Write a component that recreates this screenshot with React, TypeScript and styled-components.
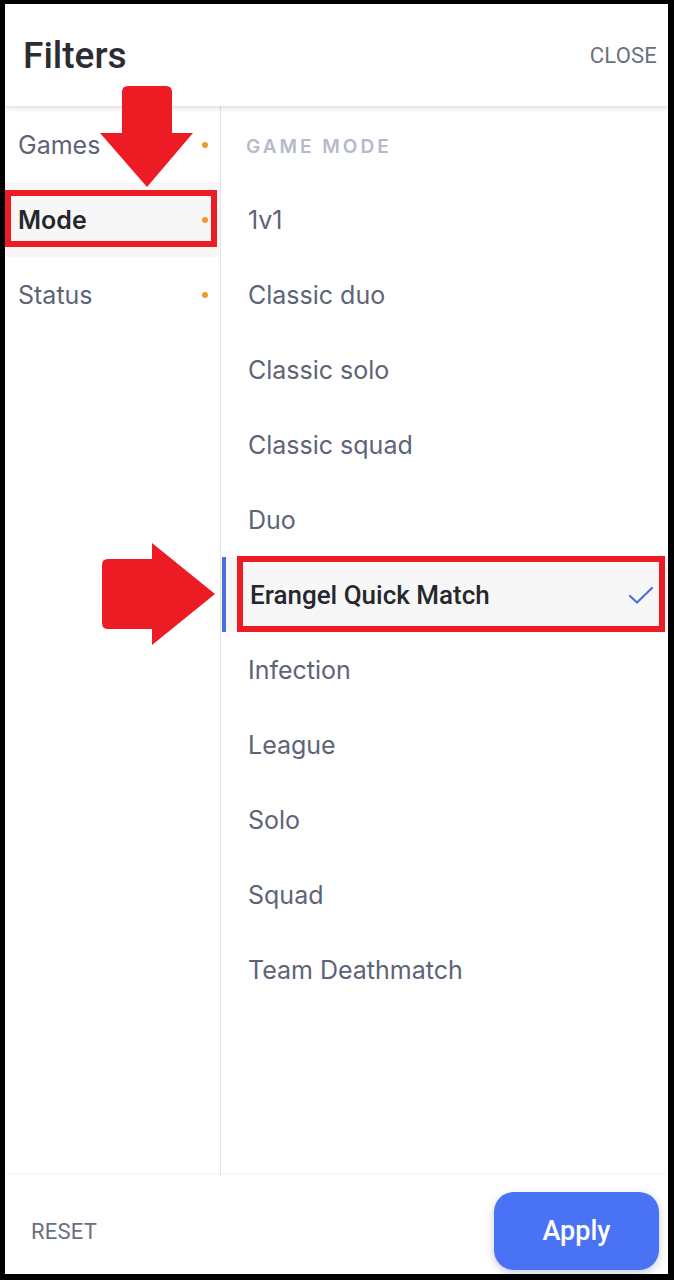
import React from 'react'
import styled, { createGlobalStyle } from 'styled-components'

const GlobalStyle = createGlobalStyle`
  html, body {
    margin: 0;
    padding: 0;
    background: #000;
  }
  * {
    box-sizing: border-box;
  }
`

const categories = [
  { label: 'Games', active: false },
  { label: 'Mode', active: true },
  { label: 'Status', active: false },
]

const modes = [
  '1v1',
  'Classic duo',
  'Classic solo',
  'Classic squad',
  'Duo',
  'Erangel Quick Match',
  'Infection',
  'League',
  'Solo',
  'Squad',
  'Team Deathmatch',
]

const selectedMode = 'Erangel Quick Match'

const App = () => {
  return (
    <>
      <GlobalStyle />
      <Frame>
        <Panel>
          <Header>
            <Title>Filters</Title>
            <TextButton>CLOSE</TextButton>
          </Header>
          <Body>
            <Sidebar>
              {categories.map(c => (
                <Category key={c.label} active={c.active}>
                  {c.label}
                  <Dot />
                </Category>
              ))}
            </Sidebar>
            <Options>
              <SectionLabel>GAME MODE</SectionLabel>
              {modes.map(m => (
                <Option key={m} selected={m === selectedMode}>
                  {m}
                  {m === selectedMode &&
                    <svg width='26' height='20' viewBox='0 0 26 20'>
                      <path d='M2 11 L9 17.5 L24 3' fill='none' stroke='#4a6fe0' strokeWidth='2.2' strokeLinecap='round' strokeLinejoin='round' />
                    </svg>
                  }
                </Option>
              ))}
            </Options>
          </Body>
          <Footer>
            <TextButton>RESET</TextButton>
            <ApplyButton>Apply</ApplyButton>
          </Footer>
        </Panel>
        <Annotations width='674' height='1280' viewBox='0 0 674 1280'>
          <path d='M128 86 H166 Q172 86 172 92 V133 H193 L147 187 L100 133 H122 V92 Q122 86 128 86 Z' fill='#ed1c24' />
          <rect x='8' y='193' width='206' height='51' fill='none' stroke='#ed1c24' strokeWidth='6' />
          <path d='M108 559 H152 V543 L215 594 L152 645 V629 H108 Q102 629 102 623 V565 Q102 559 108 559 Z' fill='#ed1c24' />
          <rect x='240' y='559' width='422' height='70' fill='none' stroke='#ed1c24' strokeWidth='6' />
        </Annotations>
      </Frame>
    </>
  )
}

const Frame = styled.div`
  position: relative;
  width: 674px;
  height: 1280px;
  background: #000;
  padding: 4px 6px 6px 5px;
`

const Panel = styled.div`
  width: 100%;
  height: 100%;
  background: #fff;
  display: flex;
  flex-direction: column;
  overflow: hidden;
`

const Header = styled.div`
  height: 102px;
  flex-shrink: 0;
  display: flex;
  align-items: center;
  justify-content: space-between;
  padding: 0 11px 0 18px;
  background: #fff;
  box-shadow: 0 2px 5px rgba(0, 0, 0, 0.14);
  position: relative;
  z-index: 1;
`

const Title = styled.h1`
  margin: 0;
  font-family: Roboto, "Liberation Sans", sans-serif;
  font-weight: 500;
  font-size: 37px;
  color: #2b2d33;
`

const TextButton = styled.span`
  font-family: Roboto, "Liberation Sans", sans-serif;
  font-size: 22px;
  color: #6b7080;
  letter-spacing: 0.2px;
`

const Body = styled.div`
  flex: 1;
  display: flex;
  min-height: 0;
`

const Sidebar = styled.div`
  width: 216px;
  flex-shrink: 0;
  padding-top: 1px;
  border-right: 1px solid #dfe3ec;
`

const Category = styled.div<{ active: boolean }>`
  height: 75px;
  display: flex;
  align-items: center;
  justify-content: space-between;
  padding: 0 12px 0 13px;
  font-family: Inter, "Noto Sans", sans-serif;
  font-size: 25px;
  font-weight: ${p => (p.active ? 600 : 400)};
  color: ${p => (p.active ? '#25272d' : '#5d6477')};
  background: ${p => (p.active ? '#f7f7f8' : 'transparent')};
`

const Dot = styled.span`
  width: 6px;
  height: 6px;
  border-radius: 50%;
  background: #f09a2a;
`

const Options = styled.div`
  flex: 1;
  padding-top: 1px;
`

const SectionLabel = styled.div`
  height: 75px;
  display: flex;
  align-items: center;
  padding: 3px 0 0 25px;
  font-family: Inter, "Noto Sans", sans-serif;
  font-size: 19px;
  font-weight: 600;
  letter-spacing: 3px;
  color: #b4bacb;
`

const Option = styled.div<{ selected: boolean }>`
  height: 75px;
  display: flex;
  align-items: center;
  justify-content: space-between;
  padding: 0 14px 0 ${p => (p.selected ? '24px' : '27px')};
  font-family: ${p => (p.selected ? 'Roboto, "Liberation Sans", sans-serif' : 'Inter, "Noto Sans", sans-serif')};
  font-size: ${p => (p.selected ? '26px' : '25px')};
  font-weight: ${p => (p.selected ? 500 : 400)};
  color: ${p => (p.selected ? '#25272d' : '#5d6477')};
  background: ${p => (p.selected ? '#f7f7f8' : 'transparent')};
  border-left: ${p => (p.selected ? '4px solid #4a6fe0' : 'none')};
  margin-left: ${p => (p.selected ? '1px' : '0')};
`

const Footer = styled.div`
  height: 99px;
  flex-shrink: 0;
  display: flex;
  align-items: center;
  justify-content: space-between;
  padding: 17px 9px 4px 26px;
  background: #fff;
  box-shadow: 0 -1px 3px rgba(0, 0, 0, 0.05);
`

const ApplyButton = styled.button`
  width: 165px;
  height: 78px;
  border: none;
  border-radius: 20px;
  background: #4a72f5;
  color: #fff;
  font-family: Roboto, "Liberation Sans", sans-serif;
  font-size: 27px;
  font-weight: 500;
  box-shadow: 0 3px 8px rgba(40, 60, 140, 0.25);
`

const Annotations = styled.svg`
  position: absolute;
  left: 0;
  top: 0;
  z-index: 2;
  pointer-events: none;
`

export default App
